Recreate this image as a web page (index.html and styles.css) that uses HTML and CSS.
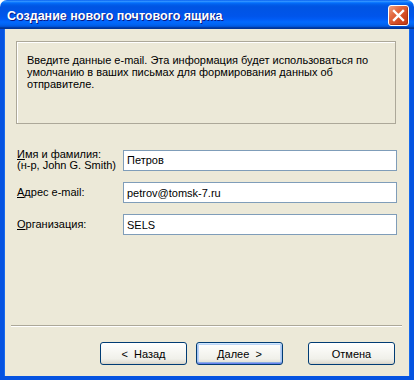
FILE: index.html
```html
<!DOCTYPE html>
<html lang="ru">
<head>
    <meta charset="UTF-8">
    <meta name="viewport" content="width=device-width, initial-scale=1.0">
    <title>Создание нового почтового ящика</title>
    <link rel="stylesheet" href="styles.css">
</head>
<body>
    <div class="window">
        <div class="titlebar">
            <span class="title">Создание нового почтового ящика</span>
            <button class="close-btn" aria-label="Закрыть">
                <svg width="13" height="13" viewBox="0 0 13 13">
                    <path d="M2 2 L11 11 M11 2 L2 11" stroke="#fff" stroke-width="2.4" stroke-linecap="square"/>
                </svg>
            </button>
        </div>
        <div class="client">
            <div class="info">
                <p>Введите данные e-mail. Эта информация будет использоваться по<br>умолчанию в ваших письмах для формирования данных об<br>отправителе.</p>
            </div>
            <div class="form">
                <label class="field-label" for="name"><u>И</u>мя и фамилия:<br>(н-р, John G. Smith)</label>
                <input id="name" class="field" type="text" value="Петров">
                <label class="field-label" for="email"><u>А</u>дрес e-mail:</label>
                <input id="email" class="field" type="text" value="petrov@tomsk-7.ru">
                <label class="field-label" for="org"><u>О</u>рганизация:</label>
                <input id="org" class="field" type="text" value="SELS">
            </div>
            <div class="footer">
                <div class="separator"></div>
                <div class="buttons">
                    <button class="btn">&lt;&nbsp;&nbsp;Назад</button>
                    <button class="btn btn-default">Далее&nbsp;&nbsp;&gt;</button>
                    <button class="btn btn-cancel">Отмена</button>
                </div>
            </div>
        </div>
    </div>
</body>
</html>
```

FILE: styles.css
```css
body {
    margin: 0;
    background-color: #FFFFFF;
    font-family: 'Liberation Sans', Arial, sans-serif;
    font-size: 11px;
    color: #000000;
}

.window {
    width: 414px;
    height: 380px;
    display: flex;
    flex-direction: column;
}

/* XP Luna title bar */
.titlebar {
    height: 29px;
    box-sizing: border-box;
    padding: 2px 5px 0 7px;
    display: flex;
    align-items: center;
    justify-content: space-between;
    border-radius: 7px 7px 0 0;
    background: linear-gradient(to bottom,
        #0058EE 0%, #3593FF 4%, #288EFF 6%, #127DFF 8%, #036FFC 10%,
        #0262EE 14%, #0057E5 20%, #0054E3 24%, #0055EB 56%, #005BF5 66%,
        #026AFE 76%, #0062EF 86%, #0052D6 92%, #0040AB 94%, #003092 100%);
}

.title {
    font-family: 'Liberation Sans', Arial, sans-serif;
    font-size: 12.5px;
    font-weight: bold;
    color: #FFFFFF;
    text-shadow: 1px 1px 0 #0A1883;
}

.close-btn {
    width: 21px;
    height: 21px;
    padding: 0;
    display: flex;
    align-items: center;
    justify-content: center;
    border: 1px solid #FFFFFF;
    border-radius: 3px;
    background: linear-gradient(135deg, #F0A080 0%, #E2673E 35%, #D0471F 70%, #C03A16 100%);
    box-shadow: inset -1px -1px 0 rgba(120, 30, 10, 0.4);
}

.client {
    flex: 1;
    display: flex;
    flex-direction: column;
    background-color: #ECE9D8;
    border: 4px solid #0553E1;
    border-top: none;
    box-shadow: inset 1px 0 0 #166AEE, inset -1px 0 0 #166AEE;
}

.info {
    height: 83px;
    box-sizing: border-box;
    margin: 12px 14px 0 12px;
    padding: 12px 10px 0 10px;
    border: 1px solid #ACA899;
    box-shadow: inset 1px 1px 0 #FFFFFF;
}

.info p {
    margin: 0;
    line-height: 12px;
}

.form {
    display: grid;
    grid-template-columns: 106px 274px;
    row-gap: 11px;
    align-items: center;
    margin: 25px 0 0 13px;
}

.field-label {
    line-height: 11px;
}

.field {
    height: 21px;
    box-sizing: border-box;
    margin: 0;
    padding: 0 3px;
    border: 1px solid #7F9DB9;
    background-color: #FFFFFF;
    font-family: 'Liberation Sans', Arial, sans-serif;
    font-size: 11px;
    color: #000000;
    outline: none;
}

.footer {
    margin-top: auto;
    padding-bottom: 11px;
}

.separator {
    margin: 0 8px 0 7px;
    height: 1px;
    background-color: #ACA899;
    border-bottom: 1px solid #FFFFFF;
}

.buttons {
    display: flex;
    justify-content: flex-end;
    gap: 9px;
    margin-top: 15px;
    padding-right: 15px;
}

.btn {
    width: 87px;
    height: 23px;
    padding: 0;
    border: 1px solid #003C74;
    border-radius: 3px;
    background: linear-gradient(to bottom, #FFFFFF 0%, #F7F7F3 40%, #F0F0EA 75%, #E3E1D6 92%, #D6D0C5 100%);
    font-family: 'Liberation Sans', Arial, sans-serif;
    font-size: 11px;
    color: #000000;
}

/* default button gets the blue inner ring */
.btn-default {
    box-shadow: inset 0 1px 0 #CEE7FF, inset 0 -1px 0 #6982EE, inset 1px 0 0 #A7C4F0, inset -1px 0 0 #A7C4F0,
                inset 0 2px 0 #BCD4F6, inset 0 -2px 0 #89ADE4, inset 2px 0 0 #BCD4F6, inset -2px 0 0 #BCD4F6;
}

.btn-cancel {
    margin-left: 16px;
}
```
